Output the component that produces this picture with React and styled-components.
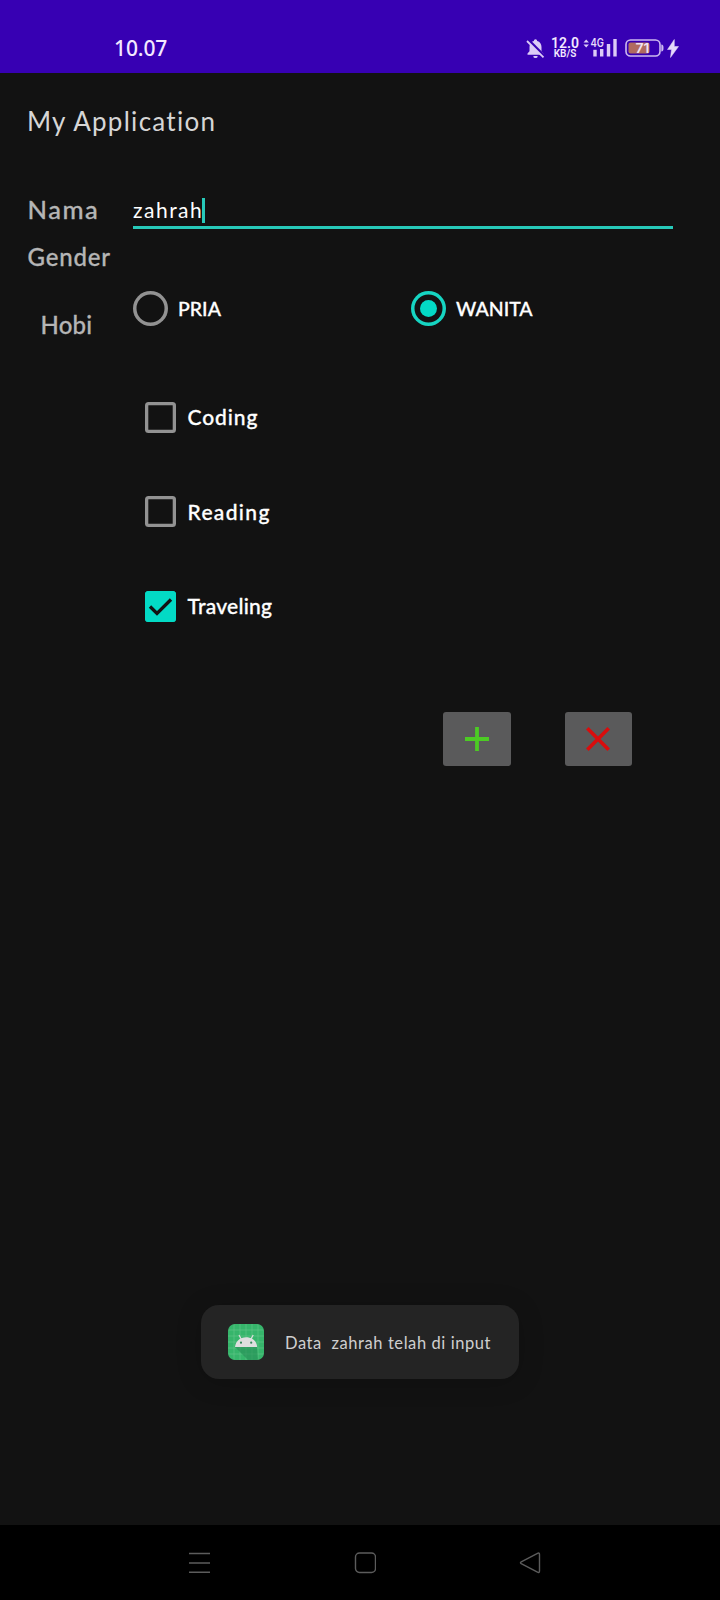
import React from 'react';
import styled, { createGlobalStyle } from 'styled-components';

const Global = createGlobalStyle`
  *, *::before, *::after { box-sizing: border-box; }
  body { margin: 0; background: #121212; }
  svg { display: block; flex: none; }
`;

const Screen = styled.div`
  width: 720px;
  height: 1600px;
  display: flex;
  flex-direction: column;
  background: #121212;
  color: #fff;
  font-family: Lato, 'Open Sans', sans-serif;
  overflow: hidden;
`;

const StatusBar = styled.header`
  height: 73px;
  flex: none;
  display: flex;
  align-items: center;
  padding: 23px 41px 0 114px;
  background: #3700b3;
  color: #f3e9ff;
`;

const Clock = styled.time`
  font: 500 21px/26px 'Noto Sans', sans-serif;
  letter-spacing: -0.1px;
  margin-right: auto;
`;

const Speed = styled.div`
  width: 26px;
  margin: 0 4px 0 7px;
  display: flex;
  flex-direction: column;
  align-items: center;
  font-family: Roboto, sans-serif;
  font-weight: 600;
  white-space: nowrap;
`;

const SpeedValue = styled.span`
  font-size: 14px;
  line-height: 12px;
`;

const SpeedUnit = styled.span`
  font-size: 10px;
  line-height: 10px;
`;

const AppBar = styled.div`
  height: 98px;
  flex: none;
  padding: 32px 27px 0;
`;

const Title = styled.h1`
  margin: 0;
  font-size: 26px;
  line-height: 32px;
  font-weight: 400;
  letter-spacing: ${(p) => p.$track}px;
  color: #d6d6d6;
`;

const Form = styled.main`
  flex: 1;
  display: grid;
  grid-template-columns: 133px 1fr;
`;

const Labels = styled.div`
  display: flex;
  flex-direction: column;
  padding: 23px 0 0 27px;
`;

const Label = styled.label`
  font-size: ${(p) => p.$size || 24}px;
  line-height: 30px;
  font-weight: 500;
  color: #b5b5b5;
  -webkit-text-stroke: 0.3px #b5b5b5;
  white-space: nowrap;
  letter-spacing: ${(p) => p.$track || 0}px;
  margin: ${(p) => p.$top || 0}px 0 0 ${(p) => p.$left || 0}px;
`;

const Fields = styled.div`
  display: flex;
  flex-direction: column;
  padding: 24px 47px 0 0;
`;

const Input = styled.div`
  display: flex;
  height: 34px;
  flex: none;
  border-bottom: 3px solid #27c9b9;
  font-size: 21px;
  line-height: 30px;
  letter-spacing: ${(p) => p.$track}px;
`;

const Value = styled.span`
  width: 69px;
  white-space: nowrap;
`;

const Caret = styled.span`
  width: 3px;
  height: 25px;
  margin-top: 3px;
  background: #27c9b9;
`;

const RadioGroup = styled.div`
  display: grid;
  grid-template-columns: 278px 1fr;
  margin-top: 62px;
`;

const Option = styled.div`
  display: flex;
  align-items: center;
  gap: ${(p) => p.$gap || 10}px;
`;

const Radio = styled.span`
  width: 35px;
  height: 35px;
  flex: none;
  display: grid;
  place-items: center;
  border-radius: 50%;
  box-shadow: inset 0 0 0 3.5px ${(p) => (p.$on ? '#16d5c2' : '#929292')};
  &::after {
    content: '';
    width: 17px;
    height: 17px;
    border-radius: 50%;
    background: ${(p) => (p.$on ? '#03dac5' : 'transparent')};
  }
`;

const OptionText = styled.span`
  font-size: ${(p) => p.$size || 21}px;
  line-height: 26px;
  font-weight: 500;
  -webkit-text-stroke: 0.3px #fff;
  white-space: nowrap;
  letter-spacing: ${(p) => p.$track || 0}px;
`;

const CheckList = styled.div`
  display: flex;
  flex-direction: column;
  gap: 63.5px;
  margin: 75.5px 0 0 11.5px;
`;

const Box = styled.span`
  width: 31px;
  height: 31px;
  flex: none;
  display: grid;
  place-items: center;
  border-radius: 3.5px;
  box-shadow: inset 0 0 0 3.3px ${(p) => (p.$on ? '#03dac5' : '#929292')};
  background: ${(p) => (p.$on ? '#03dac5' : 'transparent')};
`;

const Actions = styled.div`
  display: flex;
  justify-content: flex-end;
  gap: 54px;
  margin: 90px 41px 0 0;
`;

const ActionButton = styled.button`
  width: 67.5px;
  height: 54px;
  padding: 0;
  display: grid;
  place-items: center;
  border: 0;
  border-radius: 3px;
  background: #5a5a5b;
`;

const Toast = styled.div`
  flex: none;
  align-self: center;
  width: 318px;
  height: 74px;
  margin-bottom: 146px;
  padding: 0 27px;
  display: flex;
  align-items: center;
  gap: 21px;
  border-radius: 18px;
  background: #242424;
  box-shadow: 0 3px 26px rgba(0, 0, 0, 0.18);
`;

const ToastText = styled.span`
  padding-top: 2px;
  font-size: 16.5px;
  line-height: 22px;
  white-space: pre;
  color: #cfcfcf;
  letter-spacing: ${(p) => p.$track}px;
`;

const NavBar = styled.nav`
  height: 75px;
  flex: none;
  display: flex;
  justify-content: space-between;
  padding: 27px 179px 0 188px;
  background: #000;
`;

const BellOff = () => (
  <svg width="19" height="21" viewBox="0 0 19 21">
    <path d="M9.500 1.200a1.700 1.700 0 0 1 1.700 1.700C14 3.700 15.500 6 15.500 9v4.200l2 2.300v1.300H1.500v-1.300l2-2.300V9c0-3 1.600-5.300 4.300-6.100A1.700 1.700 0 0 1 9.500 1.200zM7.300 17.900h4.400a2.200 2.200 0 0 1-4.400 0z" fill="#dccbf7" />
    <path d="M2 1.500 18.500 18" stroke="#3700b3" strokeWidth="2.600" />
    <path d="M1 3 17.500 19.300" stroke="#dccbf7" strokeWidth="1.800" />
  </svg>
);

const Signal = () => (
  <svg width="35" height="22" viewBox="0 0 35 22">
    <path d="M1.500 5.500 4.200 2.500 6.900 5.500zM1.500 7.500h5.400L4.200 10.500z" fill="#dccbf7" />
    <g fill="#dccbf7">
      <rect x="11.300" y="12.800" width="3.400" height="6.700" />
      <rect x="18" y="12" width="3.400" height="7.500" />
      <rect x="24.800" y="7" width="3.400" height="12.500" />
      <rect x="31.300" y="2" width="3.400" height="17.500" />
    </g>
    <text x="8.500" y="10.300" fontFamily="Inter, sans-serif" fontSize="11.500" fontWeight="600" textLength="13.500" lengthAdjust="spacingAndGlyphs" fill="#e6d9fb">4G</text>
  </svg>
);

const Battery = () => (
  <svg width="39" height="18" viewBox="0 0 39 18" style={{ marginLeft: 8 }}>
    <rect x="1" y="1" width="34" height="16" rx="4.500" fill="none" stroke="#cdb9f0" strokeWidth="1.600" />
    <rect x="3.500" y="3.500" width="21" height="11" rx="2" fill="#b06a60" />
    <path d="M36.300 5.500c1.800.3 2.200 1.200 2.200 3.500s-.4 3.200-2.200 3.500z" fill="#cdb9f0" />
    <text x="10.500" y="13.600" fontFamily="Inter, sans-serif" fontSize="13" fontWeight="600" textLength="14" lengthAdjust="spacingAndGlyphs" fill="#f0e2f2">71</text>
  </svg>
);

const Bolt = () => (
  <svg width="12" height="19" viewBox="0 0 12 19" style={{ marginLeft: 3 }}>
    <path d="M7.300.5.500 10.500H4.500L3.500 18.500 11.500 7.500H7.300z" fill="#e6d9fb" stroke="#e6d9fb" strokeWidth=".5" />
  </svg>
);

const Check = () => (
  <svg width="25" height="25" viewBox="0 0 25 25">
    <path d="M2 12.500 9 19.500 23 5.500" fill="none" stroke="#121212" strokeWidth="3.300" />
  </svg>
);

const Robot = () => (
  <svg width="36" height="36" viewBox="0 0 36 36">
    <defs>
      <clipPath id="tile"><rect width="36" height="36" rx="7" /></clipPath>
    </defs>
    <g clipPath="url(#tile)">
      <rect width="36" height="36" fill="#36b56b" />
      <path d="M6 0v36M12 0v36M18 0v36M24 0v36M30 0v36M0 6h36M0 12h36M0 18h36M0 24h36M0 30h36" stroke="#64c78c" strokeWidth=".6" />
      <path d="M7 23 20 36H30L29 23z" fill="#278e55" opacity=".6" />
      <path d="M7 23c.5-5.800 5-9.800 11.200-9.800S28.700 17.200 29.200 23z" fill="#dedede" />
      <path d="M11 11l2.200 4M25.200 11 23 15" stroke="#dedede" strokeWidth="1.200" />
      <circle cx="13" cy="18.700" r="1.100" fill="#36895b" />
      <circle cx="23.200" cy="18.700" r="1.100" fill="#36895b" />
    </g>
  </svg>
);

const CheckOption = ({ label, on, track, size }) => (
  <Option $gap={12}>
    <Box $on={on}>{on && <Check />}</Box>
    <OptionText $track={track} $size={size}>{label}</OptionText>
  </Option>
);

export default function App() {
  return (
    <Screen>
      <Global />
      <StatusBar>
        <Clock>10.07</Clock>
        <BellOff />
        <Speed>
          <SpeedValue>12.0</SpeedValue>
          <SpeedUnit>KB/S</SpeedUnit>
        </Speed>
        <Signal />
        <Battery />
        <Bolt />
      </StatusBar>
      <AppBar>
        <Title $track={1.27}>My Application</Title>
      </AppBar>
      <Form>
        <Labels>
          <Label $size={25.5} $left={0.5} $track={1.5}>Nama</Label>
          <Label $top={18} $left={0.5} $track={0.8}>Gender</Label>
          <Label $top={38} $left={13.5} $track={0.2}>Hobi</Label>
        </Labels>
        <Fields>
          <Input $track={1.5}>
            <Value>zahrah</Value>
            <Caret />
          </Input>
          <RadioGroup>
            <Option>
              <Radio />
              <OptionText $size={19.5}>PRIA</OptionText>
            </Option>
            <Option>
              <Radio $on />
              <OptionText $size={19.5}>WANITA</OptionText>
            </Option>
          </RadioGroup>
          <CheckList>
            <CheckOption label="Coding" track={0.9} />
            <CheckOption label="Reading" track={1.35} />
            <CheckOption label="Traveling" track={0.25} on />
          </CheckList>
          <Actions>
            <ActionButton aria-label="Tambah">
              <svg width="24" height="24" viewBox="0 0 24 24">
                <path d="M12 0v24M0 12h24" stroke="#4ccb24" strokeWidth="3.800" />
              </svg>
            </ActionButton>
            <ActionButton aria-label="Batal">
              <svg width="24" height="24" viewBox="0 0 24 24">
                <path d="M1.300 1.300 22.700 22.700M22.700 1.300 1.300 22.700" stroke="#d90d0d" strokeWidth="3.600" />
              </svg>
            </ActionButton>
          </Actions>
        </Fields>
      </Form>
      <Toast>
        <Robot />
        <ToastText $track={0.58}>{'Data  zahrah telah di input'}</ToastText>
      </Toast>
      <NavBar>
        <svg width="23" height="22" viewBox="0 0 23 22">
          <path d="M1 1.500h21M1 11h21M1 20.300h21" stroke="#5c5c5c" strokeWidth="1.600" />
        </svg>
        <svg width="22" height="22" viewBox="0 0 22 22">
          <rect x="1.500" y="1" width="20" height="19.500" rx="4" fill="none" stroke="#5c5c5c" strokeWidth="1.400" />
        </svg>
        <svg width="22" height="22" viewBox="0 0 22 22">
          <path d="M2.200 9.800 18.500 1.300q2-.8 2 1.200v16.500q0 2-2 1.200L2.200 11.700q-1.500-1 0-1.900z" fill="none" stroke="#5c5c5c" strokeWidth="1.400" />
        </svg>
      </NavBar>
    </Screen>
  );
}
